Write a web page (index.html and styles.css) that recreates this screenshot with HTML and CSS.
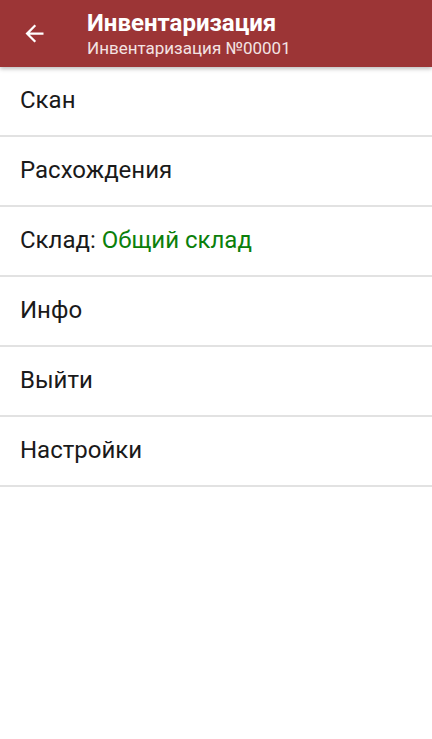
FILE: index.html
```html
<!DOCTYPE html>
<html lang="ru">
<head>
    <meta charset="UTF-8">
    <meta name="viewport" content="width=device-width, initial-scale=1.0">
    <title>Инвентаризация</title>
    <link rel="stylesheet" href="styles.css">
</head>
<body>
    <div id="app">
        <div id="toolbar">
            <button class="back">
                <svg viewBox="0 0 24 24" width="27" height="27">
                    <path fill="#fff" d="M20 11H7.83l5.59-5.59L12 4l-8 8 8 8 1.41-1.41L7.83 13H20v-2z"/>
                </svg>
            </button>
            <div class="titles">
                <div class="title">Инвентаризация</div>
                <div class="subtitle">Инвентаризация №00001</div>
            </div>
        </div>
        <div id="menu">
            <div class="item">Скан</div>
            <div class="item">Расхождения</div>
            <div class="item">Склад: <span class="value">Общий склад</span></div>
            <div class="item">Инфо</div>
            <div class="item">Выйти</div>
            <div class="item">Настройки</div>
        </div>
    </div>
</body>
</html>
```

FILE: styles.css
```css
* {
    box-sizing: border-box;
}

body {
    margin: 0;
    font-family: Roboto, 'Noto Sans', sans-serif;
    background-color: #fff;
}

#app {
    width: 432px;
    min-height: 739px;
}

#toolbar {
    position: relative;
    z-index: 1;
    height: 67px;
    display: flex;
    align-items: center;
    background-color: #9c3536;
    color: #fff;
    box-shadow: 0 2px 4px rgba(0, 0, 0, 0.25);
}

.back {
    width: 40px;
    height: 40px;
    margin-left: 14px;
    margin-right: 33px;
    padding: 0;
    border: none;
    background: none;
    display: flex;
    align-items: center;
    justify-content: center;
}

.titles {
    display: flex;
    flex-direction: column;
    padding-bottom: 1px;
}

.title {
    font-size: 24px;
    font-weight: bold;
    line-height: 29px;
}

.subtitle {
    font-size: 17px;
    line-height: 20px;
    color: #f3e3e3;
}

.item {
    height: 70px;
    padding: 0 20px 2px;
    display: flex;
    align-items: center;
    font-size: 24px;
    color: #1a1a1a;
    border-bottom: 2px solid #e2e2e2;
}

.item .value {
    color: #0b800b;
    margin-left: 6px;
}
```
